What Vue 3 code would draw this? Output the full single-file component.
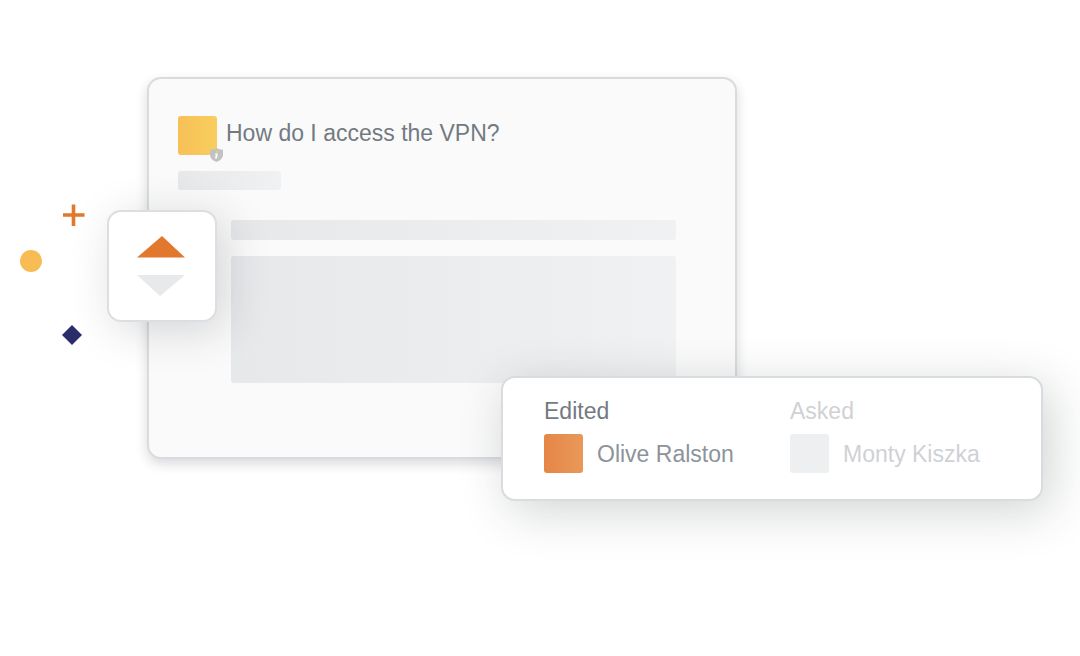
<script setup>
const question = 'How do I access the VPN?'
const people = [
  { role: 'Edited', name: 'Olive Ralston', state: 'active' },
  { role: 'Asked', name: 'Monty Kiszka', state: 'muted' },
]
</script>

<template>
  <main class="page">
    <svg class="accent plus" viewBox="0 0 22 22" aria-hidden="true">
      <path d="M0 11H21.5M10.5 0.5V22" />
    </svg>
    <span class="accent dot"></span>
    <svg class="accent diamond" viewBox="0 0 20 20" aria-hidden="true">
      <path d="M10 0L20 10L10 20L0 10Z" />
    </svg>

    <article class="card">
      <header class="question">
        <div class="avatar">
          <svg class="badge" viewBox="0 0 13 14" aria-hidden="true">
            <path
              d="M6.5 0C8.3 1 10.4 1.6 13 1.8V6.6C13 10.3 10.4 12.7 6.5 14C2.6 12.7 0 10.3 0 6.6V1.8C2.6 1.6 4.7 1 6.5 0Z"
            />
            <path class="top" d="M6.3 2.8L6 4.6H7.8L8.1 2.8Z" />
            <path class="stem" d="M5.2 5.4L5 6.5H5.7L4.9 10.6H7L7.9 5.4Z" />
          </svg>
        </div>
        <h1>{{ question }}</h1>
      </header>
      <div class="bar meta"></div>
      <div class="body">
        <div class="bar line"></div>
        <div class="bar block"></div>
      </div>

      <div class="votes">
        <button type="button" aria-label="Vote up">
          <svg class="up" viewBox="0 0 48 22"><path d="M25 0L48 21.5H0Z" /></svg>
        </button>
        <button type="button" aria-label="Vote down">
          <svg class="down" viewBox="0 0 48 22"><path d="M0 0H48L23 21Z" /></svg>
        </button>
      </div>

      <section class="people">
        <div v-for="p in people" :key="p.role" class="person" :class="p.state">
          <h2>{{ p.role }}</h2>
          <div class="who">
            <span class="swatch"></span>
            <span class="name">{{ p.name }}</span>
          </div>
        </div>
      </section>
    </article>
  </main>
</template>

<style>
body {
  margin: 0;
  background: #fff;
}
</style>

<style scoped>
* {
  box-sizing: border-box;
}
.page {
  position: relative;
  min-height: 100vh;
  padding: 77px 343px 77px 147px;
  overflow: hidden;
  font-family: 'Liberation Sans', Arial, sans-serif;
  font-size: 23px;
  line-height: 28px;
}
h1,
h2 {
  margin: 0;
  font-size: inherit;
  font-weight: 400;
}
.accent {
  position: absolute;
}
.plus {
  left: 63px;
  top: 204px;
  width: 22px;
  height: 22px;
  stroke: #e2772e;
  stroke-width: 3.6;
}
.dot {
  left: 20px;
  top: 250px;
  width: 22px;
  height: 22px;
  border-radius: 50%;
  background: #f7bc53;
}
.diamond {
  left: 62px;
  top: 325px;
  width: 20px;
  height: 20px;
  fill: #2a2d6a;
}
.card {
  position: relative;
  padding: 37px 59px 74px 29px;
  border: 2px solid #d9dbde;
  border-radius: 14px;
  background: #fafafa;
  box-shadow: 0 5px 12px rgba(30, 35, 45, 0.17);
}
.question {
  display: flex;
  gap: 9px;
  color: #737a82;
}
.question h1 {
  line-height: 34px;
}
.avatar {
  position: relative;
  flex: none;
  width: 39px;
  height: 39px;
  border-radius: 3px;
  background: linear-gradient(90deg, #f7c057, #f8ce5d);
}
.badge {
  position: absolute;
  right: -6px;
  bottom: -7px;
  width: 13px;
  height: 14px;
  fill: #c2c2c2;
}
.badge .top {
  fill: #f8ce5d;
}
.badge .stem {
  fill: #fafafa;
}
.bar {
  border-radius: 3px;
  background: linear-gradient(90deg, #e7e8ea, #f0f1f3);
}
.meta {
  width: 103px;
  height: 19px;
  margin-top: 16px;
}
.body {
  display: flex;
  flex-direction: column;
  gap: 16px;
  margin: 30px 0 0 53px;
}
.line {
  height: 20px;
}
.block {
  height: 127px;
}
.votes {
  position: absolute;
  left: -42px;
  top: 131px;
  display: flex;
  flex-direction: column;
  align-items: center;
  gap: 17px;
  padding: 24px 30px 23px 28px;
  border: 2px solid #dddee2;
  border-radius: 14px;
  background: #fff;
  box-shadow: 8px 8px 44px rgba(40, 45, 55, 0.18);
}
button {
  display: block;
  padding: 0;
  border: 0;
  background: none;
  cursor: pointer;
}
button svg {
  display: block;
  width: 48px;
  height: 22px;
}
.up {
  fill: #e2772e;
}
.down {
  fill: #e8e9eb;
}
.people {
  position: absolute;
  left: 352px;
  right: -308px;
  top: 297px;
  display: grid;
  grid-template-columns: 246px 1fr;
  padding: 19px 24px 26px 41px;
  border: 2px solid #dadbe0;
  border-radius: 14px;
  background: #fff;
  box-shadow: 8px 10px 48px rgba(40, 45, 45, 0.21);
}
.who {
  display: flex;
  align-items: center;
  gap: 14px;
  margin-top: 9px;
}
.swatch {
  flex: none;
  width: 39px;
  height: 39px;
  border-radius: 3px;
  background: #eeeff1;
}
.active {
  color: #737a82;
}
.active .swatch {
  background: linear-gradient(90deg, #e58646, #e9985a);
}
.active .name {
  color: #8d939b;
}
.muted {
  color: #cfd1d5;
}
</style>
